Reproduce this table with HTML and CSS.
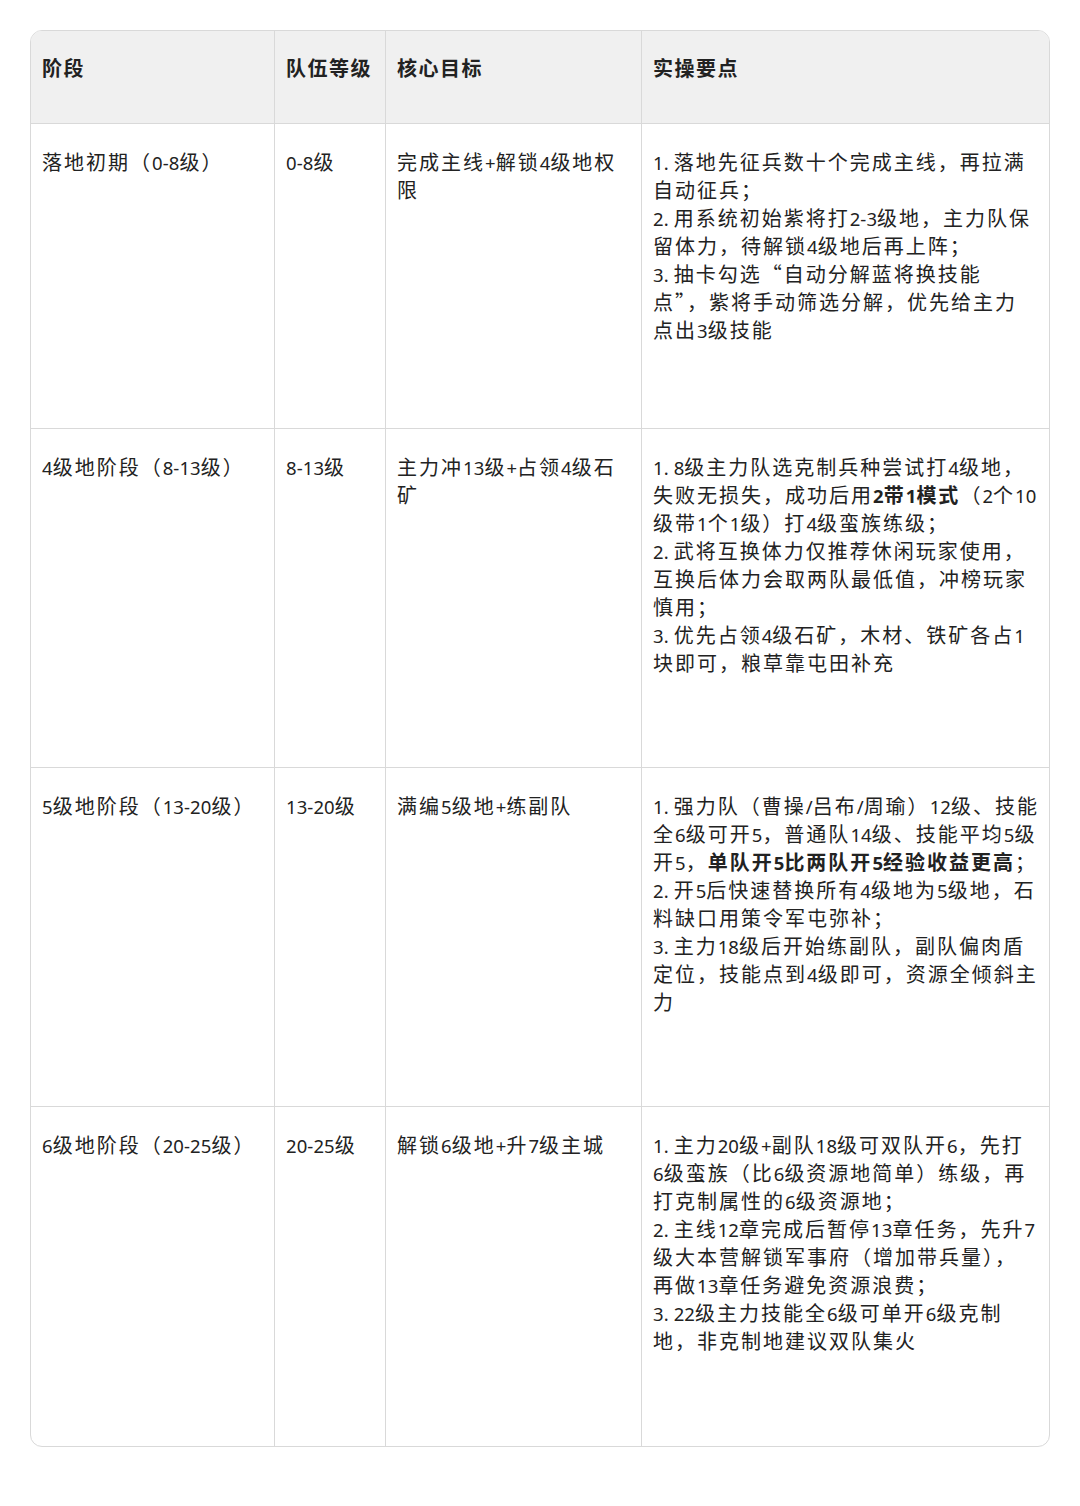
FILE: index.html
```html
<!DOCTYPE html>
<html lang="zh-CN">
<head>
<meta charset="utf-8">
<title>阶段表</title>
<link rel="stylesheet" href="styles.css">
</head>
<body>
<div class="table">
  <div class="cell head">阶段</div>
  <div class="cell head">队伍等级</div>
  <div class="cell head">核心目标</div>
  <div class="cell head last-col">实操要点</div>

  <div class="cell"><span class="l">落地初期（<span class="n">0-8</span>级）</span></div>
  <div class="cell"><span class="l"><span class="n">0-8</span>级</span></div>
  <div class="cell"><span class="l">完成主线<span class="n">+</span>解锁<span class="n">4</span>级地权</span><span class="l">限</span></div>
  <div class="cell last-col">
    <span class="l"><span class="n">1. </span>落地先征兵数十个完成主线，再拉满</span>
    <span class="l">自动征兵；</span>
    <span class="l"><span class="n">2. </span>用系统初始紫将打<span class="n">2-3</span>级地，主力队保</span>
    <span class="l">留体力，待解锁<span class="n">4</span>级地后再上阵；</span>
    <span class="l"><span class="n">3. </span>抽卡勾选“自动分解蓝将换技能</span>
    <span class="l">点”，紫将手动筛选分解，优先给主力</span>
    <span class="l">点出<span class="n">3</span>级技能</span>
  </div>

  <div class="cell"><span class="l"><span class="n">4</span>级地阶段（<span class="n">8-13</span>级）</span></div>
  <div class="cell"><span class="l"><span class="n">8-13</span>级</span></div>
  <div class="cell"><span class="l">主力冲<span class="n">13</span>级<span class="n">+</span>占领<span class="n">4</span>级石</span><span class="l">矿</span></div>
  <div class="cell last-col">
    <span class="l"><span class="n">1. 8</span>级主力队选克制兵种尝试打<span class="n">4</span>级地，</span>
    <span class="l">失败无损失，成功后用<b><span class="n">2</span>带<span class="n">1</span>模式</b>（<span class="n">2</span>个<span class="n">10</span></span>
    <span class="l">级带<span class="n">1</span>个<span class="n">1</span>级）打<span class="n">4</span>级蛮族练级；</span>
    <span class="l"><span class="n">2. </span>武将互换体力仅推荐休闲玩家使用，</span>
    <span class="l">互换后体力会取两队最低值，冲榜玩家</span>
    <span class="l">慎用；</span>
    <span class="l"><span class="n">3. </span>优先占领<span class="n">4</span>级石矿，木材、铁矿各占<span class="n">1</span></span>
    <span class="l">块即可，粮草靠屯田补充</span>
  </div>

  <div class="cell"><span class="l"><span class="n">5</span>级地阶段（<span class="n">13-20</span>级）</span></div>
  <div class="cell"><span class="l"><span class="n">13-20</span>级</span></div>
  <div class="cell"><span class="l">满编<span class="n">5</span>级地<span class="n">+</span>练副队</span></div>
  <div class="cell last-col">
    <span class="l"><span class="n">1. </span>强力队（曹操<span class="n">/</span>吕布<span class="n">/</span>周瑜）<span class="n">12</span>级、技能</span>
    <span class="l">全<span class="n">6</span>级可开<span class="n">5</span>，普通队<span class="n">14</span>级、技能平均<span class="n">5</span>级</span>
    <span class="l">开<span class="n">5</span>，<b>单队开<span class="n">5</span>比两队开<span class="n">5</span>经验收益更高</b>；</span>
    <span class="l"><span class="n">2. </span>开<span class="n">5</span>后快速替换所有<span class="n">4</span>级地为<span class="n">5</span>级地，石</span>
    <span class="l">料缺口用策令军屯弥补；</span>
    <span class="l"><span class="n">3. </span>主力<span class="n">18</span>级后开始练副队，副队偏肉盾</span>
    <span class="l">定位，技能点到<span class="n">4</span>级即可，资源全倾斜主</span>
    <span class="l">力</span>
  </div>

  <div class="cell last-row"><span class="l"><span class="n">6</span>级地阶段（<span class="n">20-25</span>级）</span></div>
  <div class="cell last-row"><span class="l"><span class="n">20-25</span>级</span></div>
  <div class="cell last-row"><span class="l">解锁<span class="n">6</span>级地<span class="n">+</span>升<span class="n">7</span>级主城</span></div>
  <div class="cell last-row last-col">
    <span class="l"><span class="n">1. </span>主力<span class="n">20</span>级<span class="n">+</span>副队<span class="n">18</span>级可双队开<span class="n">6</span>，先打</span>
    <span class="l"><span class="n">6</span>级蛮族（比<span class="n">6</span>级资源地简单）练级，再</span>
    <span class="l">打克制属性的<span class="n">6</span>级资源地；</span>
    <span class="l"><span class="n">2. </span>主线<span class="n">12</span>章完成后暂停<span class="n">13</span>章任务，先升<span class="n">7</span></span>
    <span class="l">级大本营解锁军事府（增加带兵量），</span>
    <span class="l">再做<span class="n">13</span>章任务避免资源浪费；</span>
    <span class="l"><span class="n">3. 22</span>级主力技能全<span class="n">6</span>级可单开<span class="n">6</span>级克制</span>
    <span class="l">地，非克制地建议双队集火</span>
  </div>
</div>
</body>
</html>
```

FILE: styles.css
```css
* { box-sizing: border-box; }
html, body { margin: 0; padding: 0; background: #ffffff; }
body {
  width: 1080px;
  height: 1506px;
  padding: 30px 30px 0 30px;
  font-family: "Noto Sans CJK SC", "Noto Sans", sans-serif;
  color: #222222;
}
.table {
  display: grid;
  grid-template-columns: 244px 111px 256px 409px;
  grid-template-rows: 93px 305px 339px 339px 339px;
  width: 1020px;
  border: 1px solid #d9d9d9;
  border-radius: 12px;
  overflow: hidden;
}
.cell {
  border-right: 1px solid #d9d9d9;
  border-bottom: 1px solid #d9d9d9;
  padding: 24px 10px 0 11px;
  font-size: 20px;
  line-height: 28px;
  letter-spacing: 2px;
}
.l {
  display: block;
  white-space: nowrap;
  height: 28px;
}
.n {
  font-family: "Noto Sans", "Open Sans", sans-serif;
  font-size: 18.5px;
  line-height: 18px;
  letter-spacing: 0.1px;
}
.head {
  background: #f0f0f0;
  font-weight: 700;
  padding-top: 23px;
  letter-spacing: 1.5px;
}
.last-col { border-right: none; }
.last-row { border-bottom: none; }
b { font-weight: 700; }
```
